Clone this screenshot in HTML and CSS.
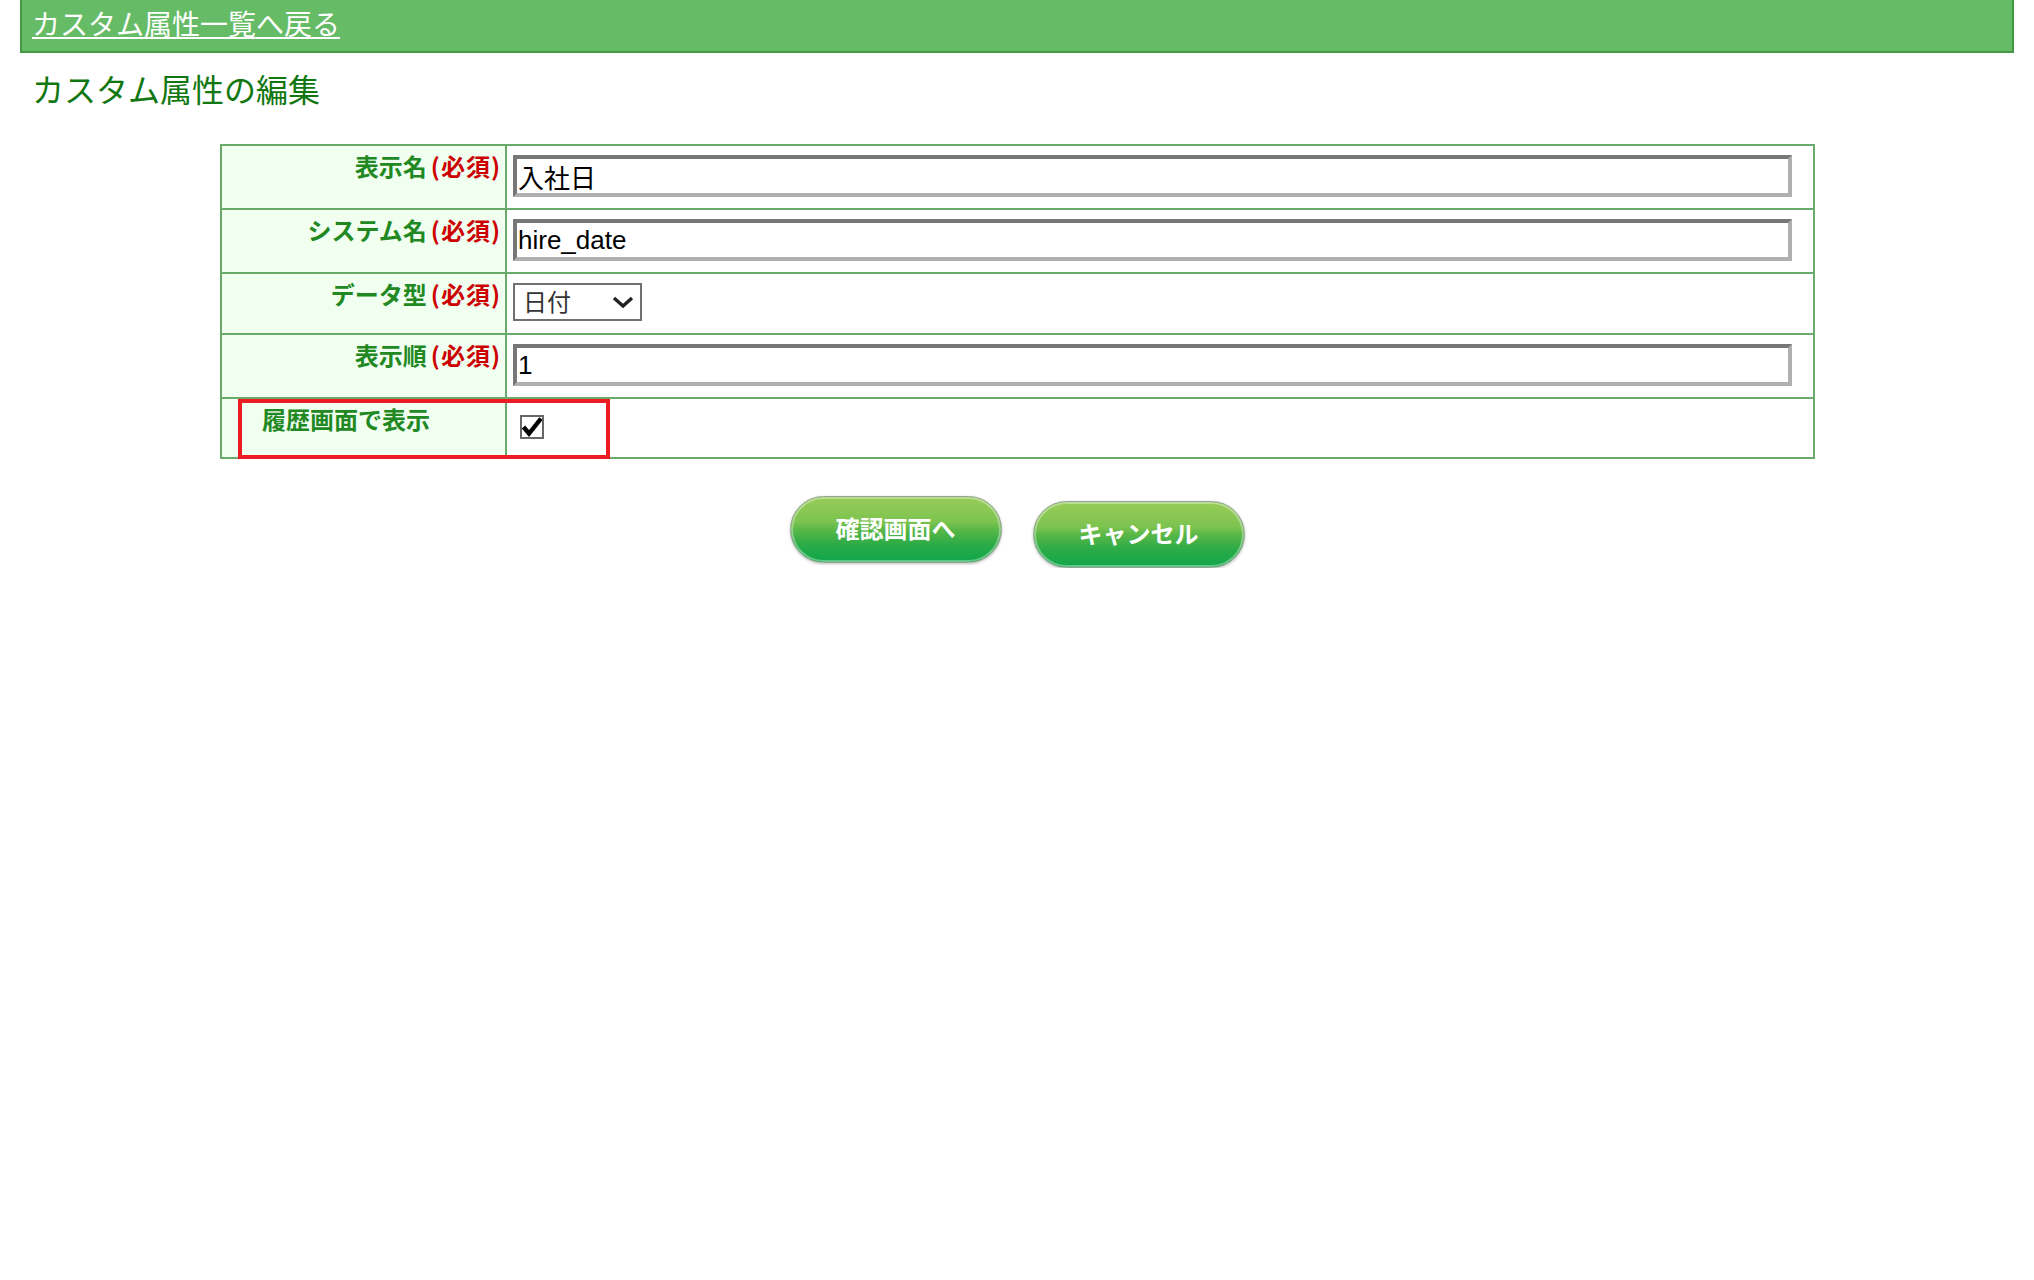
FILE: index.html
```html
<!DOCTYPE html>
<html lang="ja">
<head>
  <meta charset="UTF-8">
  <title>カスタム属性の編集</title>
  <link rel="stylesheet" href="styles.css">
</head>
<body>

  <div class="back-bar">
    <a href="#" class="back-link">カスタム属性一覧へ戻る</a>
  </div>

  <h1 class="page-title">カスタム属性の編集</h1>

  <div class="form-wrap">
    <table class="attr-table">
      <tr>
        <th class="label">表示名<span class="req">(必須)</span></th>
        <td class="value"><input type="text" class="text-input" value="入社日"></td>
      </tr>
      <tr>
        <th class="label">システム名<span class="req">(必須)</span></th>
        <td class="value"><input type="text" class="text-input" value="hire_date"></td>
      </tr>
      <tr>
        <th class="label">データ型<span class="req">(必須)</span></th>
        <td class="value">
          <span class="select-wrap">
            <select class="type-select">
              <option>日付</option>
            </select>
            <svg class="select-arrow" viewBox="0 0 22 12">
              <path d="M2 2 L11 10 L20 2" fill="none" stroke="#222" stroke-width="3.4"/>
            </svg>
          </span>
        </td>
      </tr>
      <tr>
        <th class="label">表示順<span class="req">(必須)</span></th>
        <td class="value"><input type="text" class="text-input" value="1"></td>
      </tr>
      <tr>
        <th class="label label-left">履歴画面で表示</th>
        <td class="value">
          <span class="check-box">
            <svg viewBox="0 0 20 20">
              <path d="M1.5 10 L7 16.5 L19 1.5" fill="none" stroke="#000" stroke-width="4.4"/>
            </svg>
          </span>
        </td>
      </tr>
    </table>
    <!-- red annotation frame -->
    <div class="highlight-box"></div>
  </div>

  <div class="button-row">
    <button class="pill-button">確認画面へ</button>
    <button class="pill-button cancel-button">キャンセル</button>
  </div>

</body>
</html>
```

FILE: styles.css
```css
body {
  margin: 0;
  font-family: "Noto Sans CJK JP", sans-serif;
  background-color: #fff;
  color: #333;
}

.back-bar {
  margin: 0 20px;
  height: 48px;
  padding: 3px 0 0 10px;
  background-color: #66bb66;
  border: 2px solid #449944;
  border-top: none;
}

.back-link {
  color: #fff;
  font-size: 28px;
  line-height: 40px;
  text-decoration: underline;
}

.page-title {
  margin: 15px 0 36px 32px;
  font-size: 32px;
  line-height: 40px;
  font-weight: normal;
  color: #117711;
}

.form-wrap {
  position: relative;
  width: 1595px;
  margin-left: 220px;
}

.attr-table {
  width: 100%;
  table-layout: fixed;
  border-collapse: collapse;
  border: 2px solid #6aaa6a;
}

.attr-table th,
.attr-table td {
  border: 2px solid #6aaa6a;
  vertical-align: top;
}

.label {
  width: 275px;
  padding: 5px 4px 0 4px;
  background-color: #f0fff0;
  color: #228822;
  font-size: 24px;
  line-height: 30px;
  font-weight: bold;
  text-align: right;
  white-space: nowrap;
}

.req {
  margin-left: 4px;
  letter-spacing: 1px;
  color: #cc0000;
}

.label-left {
  text-align: left;
  padding-left: 40px;
}

.value {
  padding: 9px 10px 11px 6px;
}

.text-input {
  display: block;
  width: 1279px;
  height: 42px;
  box-sizing: border-box;
  margin: 0;
  padding: 0 1px;
  border: 4px solid;
  border-color: #777 #b0b0b0 #b0b0b0 #777;
  font-family: "Liberation Sans", "Noto Sans CJK JP", sans-serif;
  font-size: 26px;
  color: #000;
  background-color: #fff;
}

.select-wrap {
  position: relative;
  display: inline-block;
  vertical-align: top;
  padding-bottom: 1px;
}

.type-select {
  display: block;
  appearance: none;
  -webkit-appearance: none;
  width: 129px;
  height: 38px;
  margin: 0;
  padding: 0 0 0 8px;
  border: 2px solid #707070;
  border-radius: 0;
  background-color: #fff;
  font-family: "Liberation Sans", "Noto Sans CJK JP", sans-serif;
  font-size: 24px;
  color: #333;
}

.select-arrow {
  position: absolute;
  right: 8px;
  top: 13px;
  width: 22px;
  height: 12px;
  pointer-events: none;
}

.check-box {
  display: block;
  width: 24px;
  height: 24px;
  box-sizing: border-box;
  margin: 7px 0 7px 7px;
  border: 2px solid #666;
  background-color: #fff;
}

.check-box svg {
  display: block;
  width: 20px;
  height: 20px;
}

.highlight-box {
  position: absolute;
  left: 18px;
  top: 255px;
  width: 372px;
  height: 60px;
  box-sizing: border-box;
  border: 4px solid #ed1c24;
  pointer-events: none;
}

.button-row {
  display: flex;
  justify-content: center;
  align-items: flex-start;
  gap: 31px;
  margin-top: 37px;
}

.pill-button {
  width: 212px;
  height: 67px;
  padding: 0 0 4px 0;
  border: 1px solid #8fa58f;
  border-radius: 34px;
  background: linear-gradient(to bottom, #98cc58 0%, #7dc350 38%, #55b646 52%, #2aab48 74%, #10a74a 100%);
  box-shadow: inset 0 0 0 2px rgba(255, 255, 255, 0.35), 0 1px 3px rgba(0, 0, 0, 0.25);
  color: #fff;
  font-family: "Noto Sans CJK JP", sans-serif;
  font-size: 24px;
  line-height: 1;
  font-weight: bold;
  cursor: pointer;
}

.cancel-button {
  margin-top: 5px;
}
```
